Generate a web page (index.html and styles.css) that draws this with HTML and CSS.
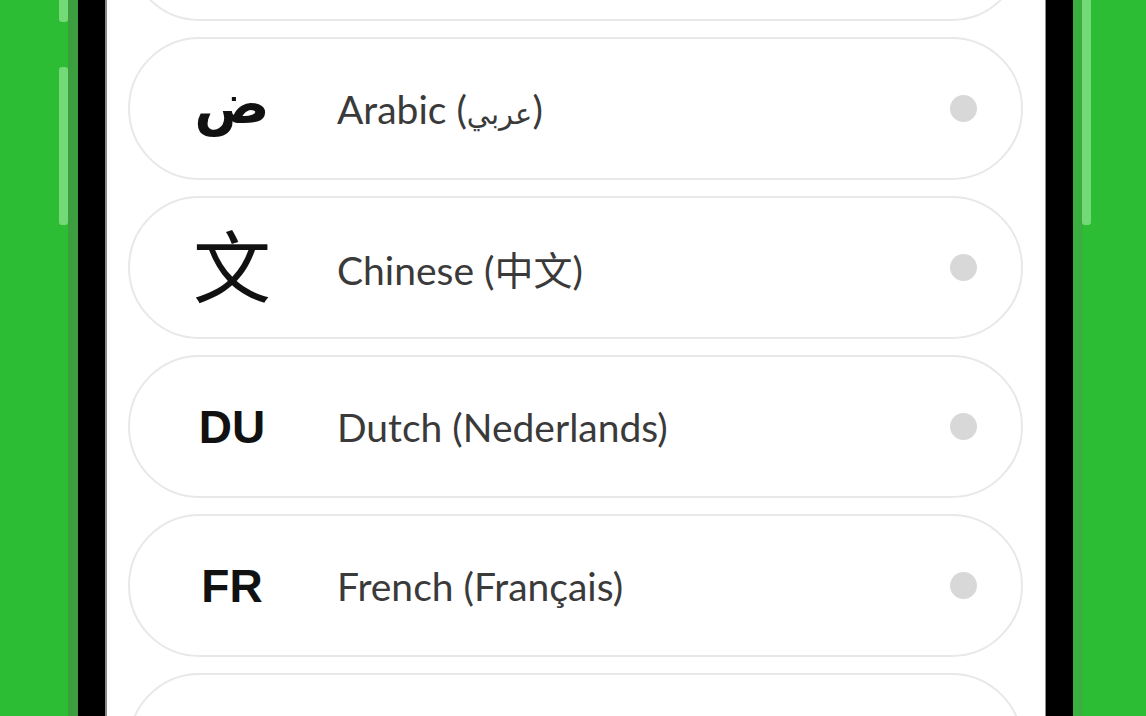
FILE: index.html
```html
<!DOCTYPE html>
<html lang="en">
<head>
    <meta charset="UTF-8">
    <meta name="viewport" content="width=device-width, initial-scale=1.0">
    <title>Select Language</title>
    <link rel="stylesheet" href="styles.css">
</head>
<body>
    <div class="stage">
        <span class="side-key side-key-top"></span>
        <span class="side-key side-key-left"></span>
        <span class="side-key side-key-right"></span>

        <div class="phone">
            <div class="screen">
                <ul class="lang-list">
                    <!-- scrolled past, only the bottom edge shows -->
                    <li class="lang-item"></li>
                    <li class="lang-item">
                        <span class="lang-icon lang-icon-ar">ض</span>
                        <span class="lang-name">Arabic (<span class="native-ar">عربي</span>)</span>
                        <span class="radio"></span>
                    </li>
                    <li class="lang-item">
                        <span class="lang-icon lang-icon-zh">文</span>
                        <span class="lang-name">Chinese (中文)</span>
                        <span class="radio"></span>
                    </li>
                    <li class="lang-item">
                        <span class="lang-icon">DU</span>
                        <span class="lang-name">Dutch (Nederlands)</span>
                        <span class="radio"></span>
                    </li>
                    <li class="lang-item">
                        <span class="lang-icon">FR</span>
                        <span class="lang-name">French (Français)</span>
                        <span class="radio"></span>
                    </li>
                    <!-- next row, only the top edge shows -->
                    <li class="lang-item"></li>
                </ul>
            </div>
        </div>
    </div>
</body>
</html>
```

FILE: styles.css
```css
body {
    margin: 0;
    padding: 0;
    background-color: #2dbd34;
    font-family: 'Lato', 'Noto Sans CJK SC', sans-serif;
    height: 716px;
    overflow: hidden;
}

.stage {
    position: relative;
    height: 716px;
    padding-left: 68px;
    display: flex;
}

/* side buttons of the phone, seen past the bezel */
.side-key {
    position: absolute;
    width: 9px;
    background-color: #74d977;
    border-radius: 0 0 3px 3px;
}

.side-key-top {
    left: 59px;
    top: 0;
    height: 22px;
}

.side-key-left {
    left: 59px;
    top: 67px;
    height: 158px;
    border-radius: 3px;
}

.side-key-right {
    left: 1082px;
    top: 0;
    height: 225px;
}

.phone {
    width: 1015px;
    height: 716px;
    background-color: #000;
    border-left: 10px solid #3c9e3f;
    border-right: 10px solid #3aae3e;
    box-sizing: border-box;
    display: flex;
}

.screen {
    margin-left: 29px;
    width: 938px;
    height: 716px;
    background-color: #fff;
    box-shadow: -2px 0 0 #8a8a8a, 1px 0 0 #8a8a8a;
    overflow: hidden;
}

.lang-list {
    list-style: none;
    margin: -122px 0 0 0;
    padding: 0 22px 0 21px;
    display: flex;
    flex-direction: column;
    gap: 16px;
}

.lang-item {
    height: 143px;
    box-sizing: border-box;
    border: 2px solid #e8e8e8;
    border-radius: 72px;
    display: flex;
    align-items: center;
    padding-left: 38px;
    padding-right: 44px;
}

.lang-icon {
    width: 128px;
    text-align: center;
    font-family: 'Liberation Sans', Arial, sans-serif;
    font-weight: bold;
    font-size: 46px;
    line-height: 1;
    color: #111;
}

.lang-icon-ar {
    font-family: 'DejaVu Sans', sans-serif;
    font-size: 56px;
    margin-top: -10px;
}

.lang-icon-zh {
    font-family: 'Noto Sans CJK SC', sans-serif;
    font-weight: 400;
    font-size: 78px;
    margin-top: -10px;
}

.lang-name {
    flex: 1;
    margin-left: 41px;
    font-size: 39px;
    color: #3a3a3a;
}

.native-ar {
    font-family: 'DejaVu Sans', sans-serif;
    font-size: 29px;
}

.radio {
    width: 27px;
    height: 27px;
    border-radius: 50%;
    background-color: #d8d8d8;
}
```
